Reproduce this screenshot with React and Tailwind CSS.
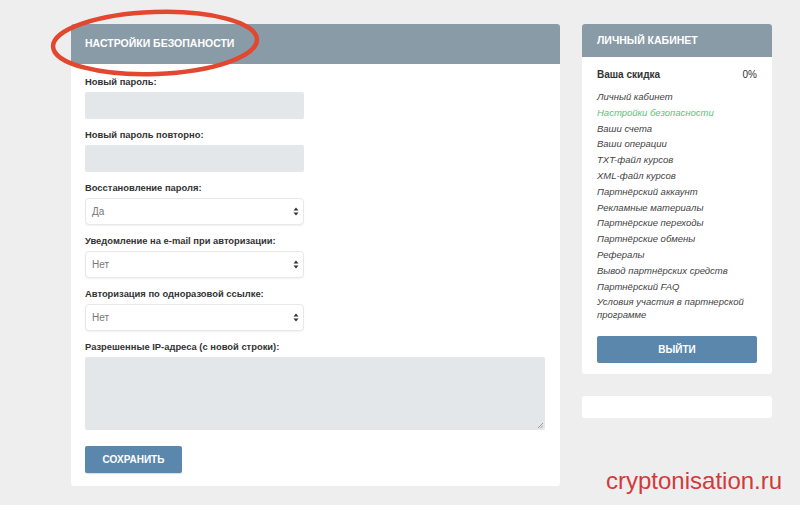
import React from 'react';

const font = { fontFamily: '"Liberation Sans", Arial, sans-serif' };

const menu = [
  'Личный кабинет',
  'Настройки безопасности',
  'Ваши счета',
  'Ваши операции',
  'TXT-файл курсов',
  'XML-файл курсов',
  'Партнёрский аккаунт',
  'Рекламные материалы',
  'Партнёрские переходы',
  'Партнёрские обмены',
  'Рефералы',
  'Вывод партнёрских средств',
  'Партнёрский FAQ',
  'Условия участия в партнерской программе',
];

function Arrows() {
  return (
    <svg width="6" height="9" viewBox="0 0 6 9" className="text-[#333]">
      <path d="M3 0.5 L5.5 3.5 H0.5 Z M3 8.5 L5.5 5.5 H0.5 Z" fill="currentColor" />
    </svg>
  );
}

function Label({ children }) {
  return <div className="text-[9.4px] font-bold text-[#333] leading-[14px] mb-[3px]">{children}</div>;
}

function TextField({ label }) {
  return (
    <div className="mb-[9px]">
      <Label>{label}</Label>
      <div className="w-[219px] h-[27px] bg-[#e3e7ea] rounded-[2px]"></div>
    </div>
  );
}

function SelectField({ label, value }) {
  return (
    <div className="mb-[9px]">
      <Label>{label}</Label>
      <div className="w-[219px] h-[27px] bg-white border border-[#e8e8e8] rounded-[4px] shadow-[0_1px_2px_rgba(0,0,0,0.06)] flex items-center justify-between pl-[6px] pr-[4px]">
        <span className="text-[10px] text-[#777]">{value}</span>
        <Arrows />
      </div>
    </div>
  );
}

export default function App() {
  return (
    <div className="relative w-[800px] h-[505px] bg-[#eeeeee] overflow-hidden" style={font}>
      <div className="flex items-start gap-[22px] pl-[71px] pt-[24px]">
        {/* Security settings */}
        <div className="w-[489px] bg-white rounded-[3px]">
          <div className="h-[40px] bg-[#8a9ba8] rounded-t-[3px] flex items-center px-[14px]">
            <span className="text-white text-[10.5px] font-bold uppercase">Настройки безопаности</span>
          </div>
          <div className="pt-[11px] pb-[13px] px-[14px]">
            <TextField label="Новый пароль:" />
            <TextField label="Новый пароль повторно:" />
            <SelectField label="Восстановление пароля:" value="Да" />
            <SelectField label="Уведомление на e-mail при авторизации:" value="Нет" />
            <SelectField label="Авторизация по одноразовой ссылке:" value="Нет" />
            <div className="mb-[16px]">
              <Label>Разрешенные IP-адреса (с новой строки):</Label>
              <div className="relative w-[460px] h-[73px] bg-[#e3e7ea] rounded-[2px]">
                <svg width="6" height="6" viewBox="0 0 6 6" className="absolute right-[2px] bottom-[2px]">
                  <path d="M1 6 L6 1 M3.5 6 L6 3.5" stroke="#888" strokeWidth="0.8" />
                </svg>
              </div>
            </div>
            <button className="w-[97px] h-[27px] bg-[#5b87ad] rounded-[2px] text-white text-[10px] font-bold uppercase shadow-[0_1px_1px_rgba(0,0,0,0.15)]">
              Сохранить
            </button>
          </div>
        </div>

        {/* Sidebar */}
        <div className="w-[190px] flex flex-col gap-[22px]">
          <div className="bg-white rounded-[3px]">
            <div className="h-[33px] bg-[#8a9ba8] rounded-t-[3px] flex items-center px-[15px]">
              <span className="text-white text-[10.5px] font-bold uppercase">Личный кабинет</span>
            </div>
            <div className="px-[15px] pt-[11px] pb-[11px]">
              <div className="flex justify-between text-[10px] font-bold text-[#333] leading-[14px] mb-[8px]">
                <span>Ваша скидка</span>
                <span className="font-normal">0%</span>
              </div>
              <div className="flex flex-col gap-[2.8px]">
                {menu.map((m, i) => (
                  <div
                    key={m}
                    className={`text-[9.5px] italic leading-[13px] ${i === 1 ? 'text-[#5cc27b]' : 'text-[#444]'}`}
                  >
                    {m}
                  </div>
                ))}
              </div>
              <button className="mt-[15px] w-full h-[27px] bg-[#5b87ad] rounded-[2px] text-white text-[10px] font-bold uppercase">
                Выйти
              </button>
            </div>
          </div>
          <div className="h-[22px] bg-white rounded-[3px]"></div>
        </div>
      </div>

      {/* Red highlight ellipse */}
      <svg className="absolute left-[48px] top-[7px]" width="214" height="72" viewBox="0 0 214 72">
        <ellipse cx="107" cy="36" rx="102" ry="31" fill="none" stroke="#e2472f" strokeWidth="4.5" transform="rotate(-2 107 36)" />
      </svg>

      {/* Watermark */}
      <div className="absolute left-[606px] top-[466px] text-[24px] leading-[30px] text-[#d23a3a]">cryptonisation.ru</div>
    </div>
  );
}
